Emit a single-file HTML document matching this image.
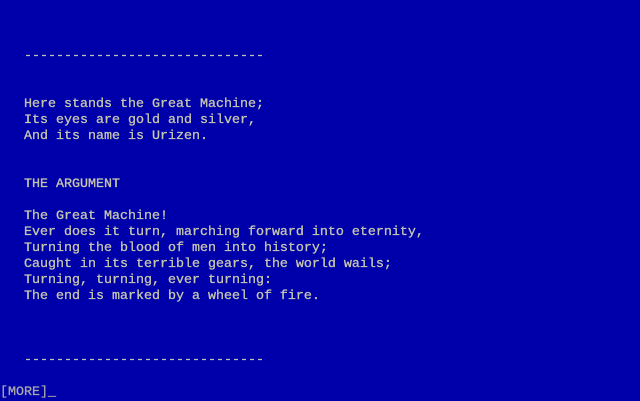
<!DOCTYPE html>
<html><head><meta charset="utf-8"><style>
html,body{margin:0;padding:0;background:#0000AA;width:640px;height:400px;overflow:hidden}
pre{margin:0;position:absolute;left:0;top:1px;font-family:"Liberation Mono",monospace;font-size:13.33px;line-height:16px;color:#C8C8B0;white-space:pre;-webkit-text-stroke:0.3px #C8C8B0}
.m{color:#AAAAAA;-webkit-text-stroke:0.3px #AAAAAA}
</style></head><body><pre>



   ------------------------------


   Here stands the Great Machine;
   Its eyes are gold and silver,
   And its name is Urizen.


   THE ARGUMENT

   The Great Machine!
   Ever does it turn, marching forward into eternity,
   Turning the blood of men into history;
   Caught in its terrible gears, the world wails;
   Turning, turning, ever turning:
   The end is marked by a wheel of fire.



   ------------------------------

<span class="m">[MORE]_</span></pre></body></html>
